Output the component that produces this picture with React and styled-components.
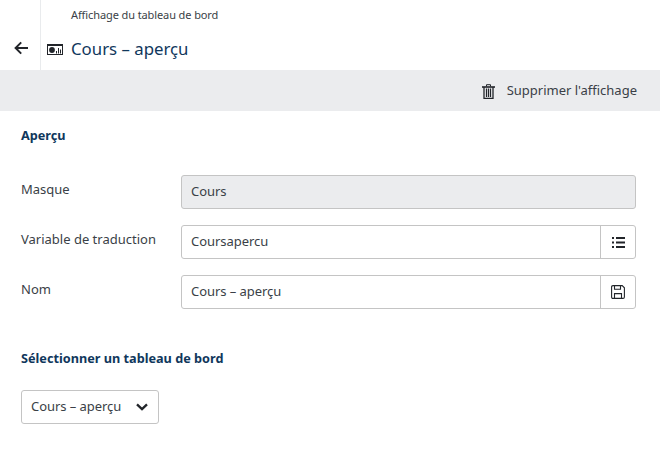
import React from 'react'
import styled, { createGlobalStyle } from 'styled-components'

const navy = '#10375c'
const text = '#3a3f47'
const line = '#c4c4c4'
const ink = '#22252a'

const GlobalStyle = createGlobalStyle`
  html, body {
    margin: 0;
    padding: 0;
    background: white;
    color: ${text};
    font-family: "Noto Sans", "Open Sans", sans-serif;
    font-size: 13px;
  }
`

const Page = styled.div`
  width: 660px;
  height: 454px;
  overflow: hidden;
`

const Header = styled.header`
  display: flex;
  height: 70px;
`

const BackCell = styled.div`
  display: flex;
  align-items: flex-end;
  justify-content: center;
  flex: 0 0 41px;
  box-sizing: border-box;
  padding: 0 0 15px 1px;
  border-right: 1px solid #e9ebed;
`

const HeaderText = styled.div`
  display: flex;
  flex-direction: column;
  padding: 7px 0 0 6px;
`

const Crumb = styled.div`
  margin-left: 24px;
  font-size: 11px;
  line-height: 16px;
  letter-spacing: -0.1px;
`

const TitleRow = styled.div`
  display: flex;
  align-items: center;
  gap: 8px;
  margin-top: 13px;
  height: 26px;
`

const Title = styled.h1`
  margin: 0;
  color: ${navy};
  font-size: 16.8px;
  font-weight: 400;
  line-height: 26px;
`

const Toolbar = styled.div`
  display: flex;
  align-items: center;
  justify-content: flex-end;
  gap: 12px;
  height: 41px;
  padding-right: 23px;
  background: #ebecee;
  font-size: 13px;
`

const ToolbarIcon = styled.span`
  display: flex;
  margin-top: 2px;
`

const ToolbarLabel = styled.span`
  margin-top: -2px;
`

const Content = styled.main`
  padding: 15px 24px 0 21px;
`

const SectionTitle = styled.h2`
  margin: 0;
  color: ${navy};
  font-size: 12.7px;
  font-weight: 700;
  line-height: 18px;
`

const Form = styled.div`
  display: grid;
  grid-template-columns: 160px 455px;
  row-gap: 16px;
  margin-top: 31px;
`

const Label = styled.label`
  padding-top: 5px;
  line-height: 18px;
`

const Field = styled.div`
  display: flex;
  height: 34px;
  box-sizing: border-box;
  border: 1px solid ${line};
  border-radius: 3px;
  background: ${p => (p.$disabled ? '#ebecee' : 'white')};
`

const FieldValue = styled.div`
  flex: 1;
  padding: 0 9px;
  line-height: 30px;
  letter-spacing: -0.05px;
`

const FieldButton = styled.div`
  display: flex;
  align-items: center;
  justify-content: center;
  flex: 0 0 34px;
  border-left: 1px solid ${line};
`

const SelectTitle = styled(SectionTitle)`
  margin-top: 40px;
`

const Select = styled.div`
  display: flex;
  align-items: center;
  justify-content: space-between;
  width: 138px;
  height: 34px;
  box-sizing: border-box;
  margin-top: 23px;
  padding: 0 10px 0 9px;
  border: 1px solid ${line};
  border-radius: 3px;
  line-height: 30px;
  letter-spacing: -0.05px;
`

const SelectLabel = styled.span`
  margin-top: -2px;
`

const ArrowLeft = () => (
  <svg width="14" height="14" viewBox="0 0 14 14" fill="none" stroke={ink} strokeWidth="2">
    <path d="M14 7H2M7.2 1.4 1.6 7l5.6 5.6" />
  </svg>
)

const DashboardIcon = () => (
  <svg width="16" height="11" viewBox="0 0 16 11" fill="none">
    <rect x="0.5" y="0.5" width="15" height="10" stroke={ink} />
    <path d="M0 1h16" stroke={ink} strokeWidth="2" />
    <circle cx="5" cy="6" r="2.9" fill={ink} />
    <path d="M9.5 7v2.5M11.5 4v5.5M13.5 5.5v4" stroke={ink} />
  </svg>
)

const TrashIcon = () => (
  <svg width="13" height="15" viewBox="0 0 13 15" fill="none" stroke={ink}>
    <path d="M0 3h13" strokeWidth="1.6" />
    <path d="M4.5 2.5V.7h4v1.8" />
    <path d="M2 3v11.4h9V3" strokeWidth="1.3" />
    <path d="M4.5 4.5V13M6.5 4.5V13M8.5 4.5V13" strokeWidth="1.2" />
  </svg>
)

const ListIcon = () => (
  <svg width="13" height="11" viewBox="0 0 13 11" fill={ink}>
    <rect x="0" y="0" width="2" height="2" />
    <rect x="4" y="0" width="9" height="2" />
    <rect x="0" y="4.5" width="2" height="2" />
    <rect x="4" y="4.5" width="9" height="2" />
    <rect x="0" y="9" width="2" height="2" />
    <rect x="4" y="9" width="9" height="2" />
  </svg>
)

const SaveIcon = () => (
  <svg width="14" height="14" viewBox="0 0 14 14" fill="none" stroke={ink} strokeWidth="1.1">
    <path d="M.6 2Q.6.6 2 .6h9.2l2.2 2.2V12q0 1.4-1.4 1.4H2Q.6 13.4.6 12z" />
    <path d="M3.5.6v3.6h6V.6M3.5 13.4V8.6h7v4.8" />
  </svg>
)

const Chevron = () => (
  <svg width="12" height="8" viewBox="0 0 12 8" fill="none" stroke={ink} strokeWidth="2.3">
    <path d="M1 1.4 6 6.2l5-4.8" />
  </svg>
)

export default function App() {
  return (
    <Page>
      <GlobalStyle />
      <Header>
        <BackCell>
          <ArrowLeft />
        </BackCell>
        <HeaderText>
          <Crumb>Affichage du tableau de bord</Crumb>
          <TitleRow>
            <DashboardIcon />
            <Title>Cours – aperçu</Title>
          </TitleRow>
        </HeaderText>
      </Header>

      <Toolbar>
        <ToolbarIcon>
          <TrashIcon />
        </ToolbarIcon>
        <ToolbarLabel>Supprimer l'affichage</ToolbarLabel>
      </Toolbar>

      <Content>
        <SectionTitle>Aperçu</SectionTitle>

        <Form>
          <Label>Masque</Label>
          <Field $disabled>
            <FieldValue>Cours</FieldValue>
          </Field>

          <Label>Variable de traduction</Label>
          <Field>
            <FieldValue>Coursapercu</FieldValue>
            <FieldButton>
              <ListIcon />
            </FieldButton>
          </Field>

          <Label>Nom</Label>
          <Field>
            <FieldValue>Cours – aperçu</FieldValue>
            <FieldButton>
              <SaveIcon />
            </FieldButton>
          </Field>
        </Form>

        <SelectTitle>Sélectionner un tableau de bord</SelectTitle>

        <Select>
          <SelectLabel>Cours – aperçu</SelectLabel>
          <Chevron />
        </Select>
      </Content>
    </Page>
  )
}
